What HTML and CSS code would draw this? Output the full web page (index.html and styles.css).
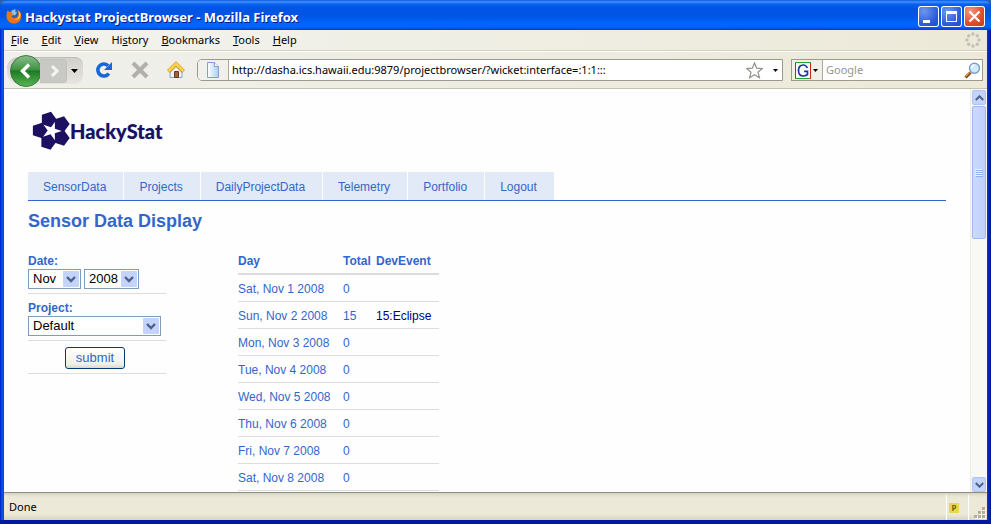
FILE: index.html
```html
<!DOCTYPE html>
<html lang="en">
<head>
<meta charset="utf-8">
<title>Hackystat ProjectBrowser - Mozilla Firefox</title>
<link rel="stylesheet" href="styles.css">
</head>
<body>
<div class="window">
  <header class="titlebar">
    <svg class="fox" viewBox="0 0 16 16" width="16" height="16" aria-hidden="true">
      <circle cx="8" cy="8" r="7" fill="#2a5fb4"/>
      <path d="M5 3.500q2-2.500 5-2l-1 2 2 1-2 3-3-1z" fill="#8cc4ee"/>
      <path d="M1.500 2.500L3.500 4l3-.5-1 2 2 1.500-2 1.500c1 2 4.500 2 6.500-.5.800-2 .5-4-1-6.500 3 1.500 4.500 4 4.300 7C15 13 12 15.600 8 15.600S.6 12.500.5 8.500c0-2.500.3-4.500 1-6z" fill="#e8761c"/>
      <path d="M12.500 2.500c2.500 2.500 2.500 6 .5 8-1.500 1.500-4 1.500-5 1 4 .2 6-3 4.500-9z" fill="#ffd24a"/>
    </svg>
    <h1 class="title">Hackystat ProjectBrowser - Mozilla Firefox</h1>
    <div class="controls">
      <button class="ctl" aria-label="Minimize"><svg viewBox="0 0 21 21" width="21" height="21"><path d="M5 14h7v3H5z" fill="#fff"/></svg></button>
      <button class="ctl" aria-label="Maximize"><svg viewBox="0 0 21 21" width="21" height="21"><path d="M5 5h11v11H5zM6 8v7h9V8z" fill="#fff" fill-rule="evenodd"/></svg></button>
      <button class="ctl ctl-close" aria-label="Close"><svg viewBox="0 0 21 21" width="21" height="21"><path d="M5.500 5.500l10 10M15.500 5.500l-10 10" stroke="#fff" stroke-width="2.200"/></svg></button>
    </div>
  </header>

  <nav class="menubar">
    <button><u>F</u>ile</button>
    <button><u>E</u>dit</button>
    <button><u>V</u>iew</button>
    <button>Hi<u>s</u>tory</button>
    <button><u>B</u>ookmarks</button>
    <button><u>T</u>ools</button>
    <button><u>H</u>elp</button>
    <svg class="throbber" viewBox="0 0 16 16" width="16" height="16" aria-hidden="true">
      <g fill="#c3c1b6"><circle cx="8" cy="2" r="1.700"/><circle cx="12.300" cy="3.700" r="1.700"/><circle cx="14" cy="8" r="1.700"/><circle cx="12.300" cy="12.300" r="1.700"/><circle cx="8" cy="14" r="1.700"/><circle cx="3.700" cy="12.300" r="1.700"/><circle cx="2" cy="8" r="1.700"/><circle cx="3.700" cy="3.700" r="1.700"/></g>
    </svg>
  </nav>

  <div class="toolbar">
    <div class="history">
      <button class="back" aria-label="Back"><svg viewBox="0 0 32 32" width="32" height="32">
        <defs><linearGradient id="green" x1="0" y1="0" x2="0" y2="1"><stop offset="0" stop-color="#8abf8a"/><stop offset=".45" stop-color="#3f9443"/><stop offset=".5" stop-color="#1d7a24"/><stop offset="1" stop-color="#58b652"/></linearGradient></defs>
        <circle cx="16" cy="16" r="15.500" fill="url(#green)" stroke="#3f7842"/>
        <path d="M19 9.500L12.500 16l6.500 6.500" fill="none" stroke="#fff" stroke-width="3.400"/>
      </svg></button>
      <button class="forward" aria-label="Forward"><svg viewBox="0 0 26 22" width="26" height="22"><path d="M12 6l5 5-5 5" fill="none" stroke="#f4f4f2" stroke-width="3"/></svg></button>
      <button class="drop" aria-label="Recent pages"><svg viewBox="0 0 7 4" width="7" height="4"><path d="M0 0h7L3.500 4z"/></svg></button>
    </div>
    <button class="tool" aria-label="Reload"><svg viewBox="0 0 18 18" width="18" height="18"><path d="M13.800 12.400A6 6 0 1 1 13 4.700" fill="none" stroke="#1767d8" stroke-width="3.600"/><path d="M17 1v8H9z" fill="#1767d8"/></svg></button>
    <button class="tool" aria-label="Stop"><svg viewBox="0 0 18 18" width="18" height="18"><path d="M2 2l14 14M16 2L2 16" stroke="#b1b0aa" stroke-width="4"/></svg></button>
    <button class="tool" aria-label="Home"><svg viewBox="0 0 18 18" width="18" height="18"><path d="M3 9l6-6 6 6v7.500H3z" fill="#eef4fd" stroke="#8aa4d0"/><path d="M7.500 10.500h4v6h-4z" fill="#a5623a" stroke="#6b3819"/><path d="M1.500 10.500L9 3l7.500 7.500" fill="none" stroke="#cf8a10" stroke-width="4"/><path d="M1.700 10L9 2.800l7.300 7.200" fill="none" stroke="#ffd550" stroke-width="2.600"/></svg></button>
    <div class="address">
      <label class="site" for="url" aria-label="Address"><svg viewBox="0 0 14 16" width="14" height="16"><defs><linearGradient id="sheet"><stop stop-color="#fff"/><stop offset="1" stop-color="#abcdf5"/></linearGradient></defs><path d="M1.500.5h7l4 4v11h-11z" fill="url(#sheet)" stroke="#7f9fd6"/><path d="M8.500.5v4h4" fill="#fff" stroke="#7f9fd6"/></svg></label>
      <input id="url" type="text" value="http://dasha.ics.hawaii.edu:9879/projectbrowser/?wicket:interface=:1:1:::">
      <button class="star" aria-label="Bookmark"><svg viewBox="0 0 17 17" width="17" height="17"><path d="M8.500 1l2.200 5.200 5.500.4-4.200 3.600 1.400 5.500-4.900-3-4.900 3L5 10.200.8 6.600l5.500-.4z" fill="#fff" stroke="#92928c" stroke-width="1.200"/></svg></button>
      <button class="drop" aria-label="Show history"><svg viewBox="0 0 5 3" width="5" height="3"><path d="M0 0h5L2.500 3z"/></svg></button>
    </div>
    <div class="search">
      <button class="engine" aria-label="Search engine"><svg viewBox="0 0 23 17" width="23" height="17"><path d="M0 0h16v17H0z" fill="#fff"/><path d="M.5 17V.5H15" fill="none" stroke="#2750c0"/><path d="M1 .5h15M0 16.500h15" stroke="#29a329"/><path d="M15.500 1v16" stroke="#d32020"/><path d="M12.300 6C11.500 3.800 10 3 8.200 3 5.300 3 3.500 5.300 3.500 8.500S5.300 14 8.200 14c1.700 0 3.100-.6 4.300-1.500V9.300H9" fill="none" stroke="#183a9c" stroke-width="1.700"/><path d="M18 7h5l-2.500 3z"/></svg></button>
      <input type="text" placeholder="Google" aria-label="Search">
      <button class="glass" aria-label="Search"><svg viewBox="0 0 17 17" width="17" height="17"><path d="M1.500 15.500l5-5" stroke="#754018" stroke-width="3"/><path d="M1.500 14.500l4-4" stroke="#e79b35" stroke-width="1.500"/><circle cx="10.500" cy="6.200" r="5" fill="#cdebfb" stroke="#7d9cc4" stroke-width="1.400"/><path d="M7.500 6a3.200 3.200 0 0 1 3-3" fill="none" stroke="#fff" stroke-width="1.500"/></svg></button>
    </div>
  </div>

  <div class="viewport">
    <main class="page">
      <div class="logo">
        <svg viewBox="0 0 38 40" width="38" height="40" aria-hidden="true">
          <defs><path id="patch" d="M7.300 0L2.260 6.940-5.900 4.290v-8.580l8.160-2.650z"/></defs>
          <g fill="#1e1060">
            <use href="#patch" transform="translate(7.500 19.500) scale(1.120)"/>
            <use href="#patch" transform="translate(16.500 8.500) rotate(72) scale(1.120)"/>
            <use href="#patch" transform="translate(29.500 13) rotate(144) scale(1.120)"/>
            <use href="#patch" transform="translate(29.500 27) rotate(216) scale(1.120)"/>
            <use href="#patch" transform="translate(16 31) rotate(288) scale(1.120)"/>
          </g>
        </svg>
        <span>HackyStat</span>
      </div>
      <nav class="tabs">
        <a href="#">SensorData</a>
        <a href="#">Projects</a>
        <a href="#">DailyProjectData</a>
        <a href="#">Telemetry</a>
        <a href="#">Portfolio</a>
        <a href="#">Logout</a>
      </nav>
      <h2>Sensor Data Display</h2>
      <div class="columns">
        <form class="filters">
          <div class="field">
            <label for="month">Date:</label>
            <div class="selects">
              <span class="select month"><select id="month"><option>Nov</option></select><svg viewBox="0 0 16 16" width="16" height="16"><rect width="16" height="16" rx="1" fill="#c3d3fb"/><path d="M4 6l4 4 4-4" fill="none" stroke="#4d6185" stroke-width="2.400"/></svg></span>
              <span class="select year"><select aria-label="Year"><option>2008</option></select><svg viewBox="0 0 16 16" width="16" height="16"><rect width="16" height="16" rx="1" fill="#c3d3fb"/><path d="M4 6l4 4 4-4" fill="none" stroke="#4d6185" stroke-width="2.400"/></svg></span>
            </div>
          </div>
          <div class="field">
            <label for="project">Project:</label>
            <div class="selects">
              <span class="select project"><select id="project"><option>Default</option></select><svg viewBox="0 0 16 16" width="16" height="16"><rect width="16" height="16" rx="1" fill="#c3d3fb"/><path d="M4 6l4 4 4-4" fill="none" stroke="#4d6185" stroke-width="2.400"/></svg></span>
            </div>
          </div>
          <div class="field actions"><button type="button" class="submit">submit</button></div>
        </form>
        <table class="data">
          <thead><tr><th class="day">Day</th><th class="total">Total</th><th>DevEvent</th></tr></thead>
          <tbody>
            <tr><td>Sat, Nov 1 2008</td><td>0</td><td></td></tr>
            <tr><td>Sun, Nov 2 2008</td><td>15</td><td><a href="#">15:Eclipse</a></td></tr>
            <tr><td>Mon, Nov 3 2008</td><td>0</td><td></td></tr>
            <tr><td>Tue, Nov 4 2008</td><td>0</td><td></td></tr>
            <tr><td>Wed, Nov 5 2008</td><td>0</td><td></td></tr>
            <tr><td>Thu, Nov 6 2008</td><td>0</td><td></td></tr>
            <tr><td>Fri, Nov 7 2008</td><td>0</td><td></td></tr>
            <tr><td>Sat, Nov 8 2008</td><td>0</td><td></td></tr>
          </tbody>
        </table>
      </div>
    </main>
    <div class="scrollbar">
      <button class="arrow" aria-label="Scroll up"><svg viewBox="0 0 9 6" width="9" height="6"><path d="M.8 5l3.700-3.700L8.200 5" fill="none" stroke="#4d6185" stroke-width="2"/></svg></button>
      <div class="track"><div class="thumb"><svg viewBox="0 0 8 8" width="8" height="8"><path d="M0 .5h7M0 2.500h7M0 4.500h7M0 6.500h7" stroke="#eef4fe"/><path d="M1 1.500h7M1 3.500h7M1 5.500h7M1 7.500h7" stroke="#8cb0f8"/></svg></div></div>
      <button class="arrow" aria-label="Scroll down"><svg viewBox="0 0 9 6" width="9" height="6"><path d="M.8 1l3.700 3.700L8.200 1" fill="none" stroke="#4d6185" stroke-width="2"/></svg></button>
    </div>
  </div>

  <footer class="status">
    <span class="message">Done</span>
    <span class="addon"><b>P</b></span>
    <svg class="grip" viewBox="0 0 12 12" width="12" height="12" aria-hidden="true"><g fill="#fff"><path d="M9 1h3v3H9zM5 5h3v3H5zM9 5h3v3H9zM1 9h3v3H1zM5 9h3v3H5zM9 9h3v3H9z"/></g><g fill="#b2ad98"><path d="M8 0h3v3H8zM4 4h3v3H4zM8 4h3v3H8zM0 8h3v3H0zM4 8h3v3H4zM8 8h3v3H8z"/></g></svg>
  </footer>
</div>
</body>
</html>
```
FILE: styles.css
```css
* { box-sizing: border-box; }

body {
  margin: 0;
  background: #2a62ae;
  font: 11px/14px "Noto Sans", sans-serif;
  color: #000;
}

button {
  margin: 0;
  padding: 0;
  border: 0;
  background: none;
  font: inherit;
  color: inherit;
}

svg { display: block; flex: none; }

.window {
  display: flex;
  flex-direction: column;
  height: 100vh;
  padding: 0 4px 4px;
  overflow: hidden;
  border-radius: 8px 8px 0 0;
  background: linear-gradient(90deg, #0019cf, #0855dd 2px, #0855dd 3px, #003ddc 4px, #003ddc calc(100% - 4px), #0030c8 calc(100% - 3px), #00138c);
  box-shadow: inset 0 -4px #0019a0;
}

/* Title bar */
.titlebar {
  display: flex;
  align-items: center;
  gap: 3px;
  flex: none;
  height: 30px;
  margin: 0 -4px;
  padding: 2px 6px 0;
  background: linear-gradient(#0a5ae0, #3f92ff 2px, #0a62ee 4px, #0054e3 8px, #0055e5 16px, #0066ff 24px, #0062f8 27px, #003dd7 30px);
}

.title {
  flex: 1;
  margin: 0;
  padding-top: 1px;
  font: bold 13px/18px "Noto Sans", sans-serif;
  color: #fff;
  text-shadow: 1px 1px #0a1883;
  white-space: nowrap;
}

.controls { display: flex; gap: 2px; }

.ctl {
  display: grid;
  place-items: center;
  width: 21px;
  height: 21px;
  border-radius: 3px;
  background: radial-gradient(circle at 30% 25%, #6e97f0, #2b5cdb 60%, #1b47c4);
  box-shadow: inset 0 0 0 1px #fff;
}

.ctl-close { background: radial-gradient(circle at 30% 25%, #f09a82, #dd4f2b 55%, #c0371a); }

/* Menu */
.menubar {
  display: flex;
  align-items: center;
  gap: 13px;
  flex: none;
  height: 21px;
  padding: 0 6px 0 7px;
  border-bottom: 1px solid #d3cfbc;
  background: linear-gradient(90deg, #f3f3ef, #ece9d8);
}

.throbber { margin-left: auto; }

/* Navigation toolbar */
.toolbar {
  display: flex;
  align-items: center;
  flex: none;
  height: 38px;
  padding: 0 4px 0 3px;
  border-top: 1px solid #fff;
  border-bottom: 1px solid #c5c2b2;
  background: linear-gradient(90deg, #f0f0ec, #ece9d8);
}

.history {
  display: flex;
  align-items: center;
  width: 76px;
  height: 27px;
  margin-right: 12px;
  padding-left: 3px;
  border-top: 1px solid #bdbcb5;
  border-radius: 12px 8px 8px 12px;
  background: linear-gradient(#d1d0ca, #e6e5df);
}

.forward {
  margin-left: -2px;
  border: 1px solid #c2c2bd;
  border-left: 0;
  border-radius: 0 4px 4px 0;
  background: #c8c8c4;
}

.drop { padding: 4px; }

.tool { margin-right: 18px; }

.address,
.search {
  display: flex;
  align-items: center;
  height: 22px;
  border: 1px solid #9c9a8c;
  background: #fff;
}

.address {
  flex: 1;
  min-width: 0;
  margin-right: 8px;
  margin-left: -6px;
  border-radius: 5px 0 0 5px;
}

.site {
  display: grid;
  place-items: center;
  align-self: stretch;
  width: 31px;
  border-right: 1px solid #aaa899;
  border-radius: 4px 0 0 4px;
  background: #f1f0ea;
}

input {
  flex: 1;
  min-width: 0;
  padding: 0 3px;
  border: 0;
  background: none;
  font: inherit;
  color: inherit;
}

.star { margin-right: 6px; }

.search { width: 192px; padding-right: 1px; }

.engine {
  align-self: stretch;
  padding: 0 4px 0 3px;
  border-right: 1px solid #aaa899;
  background: #f1f0e8;
}

.search input::placeholder { color: #98968a; opacity: 1; }

/* Page area */
.viewport {
  display: flex;
  flex: 1;
  min-height: 0;
  background: #fff;
}

.page {
  flex: 1;
  min-width: 0;
  padding: 22px 24px 0;
  overflow: hidden;
  background: #fefefe;
  font: 12px/16px "Liberation Sans", Arial, sans-serif;
  color: #3366cc;
}

.logo {
  display: flex;
  align-items: center;
  height: 40px;
  margin: 0 0 21px 4px;
  font: 900 20px/24px Lato, sans-serif;
  color: #1e1060;
}

.logo span { text-shadow: 0 0 1px #8ecbe0; }

.tabs {
  display: flex;
  gap: 1px;
  border-bottom: 1px solid #3366cc;
}

.tabs a {
  padding: 7px 17px 5px 15px;
  background: #e3eaf7;
  color: #3366cc;
  text-decoration: none;
}

h2 {
  margin: 9px 0 21px;
  font: bold 18px/22px "Liberation Sans", Arial, sans-serif;
}

.columns {
  display: grid;
  grid-template-columns: 138px 201px;
  align-items: start;
  gap: 72px;
}

.field {
  margin-bottom: 6px;
  padding-bottom: 4px;
  border-bottom: 1px solid #dcdcdc;
}

.field label {
  display: block;
  font-weight: bold;
}

.selects { display: flex; gap: 3px; }

.select {
  display: grid;
  align-items: center;
  height: 20px;
}

.select > * { grid-area: 1 / 1; }

.select svg {
  justify-self: end;
  margin-right: 2px;
  pointer-events: none;
}

.select select {
  appearance: none;
  width: 100%;
  height: 20px;
  padding: 0 4px;
  border: 1px solid #7f9db9;
  border-radius: 0;
  background: #fff;
  font: 13px/16px "Liberation Sans", Arial, sans-serif;
  color: #000;
}

.month { width: 53px; }
.year { width: 55px; }
.project { width: 133px; }

.actions {
  display: grid;
  justify-items: center;
  padding-right: 4px;
}

.submit {
  height: 22px;
  padding: 0 10px;
  border: 1px solid #003c74;
  border-radius: 3px;
  background: linear-gradient(#fff, #f0f0ea 80%, #dcd8cc);
  font: 13px/16px "Liberation Sans", Arial, sans-serif;
  color: #3366cc;
}

.data {
  width: 100%;
  border-collapse: collapse;
  table-layout: fixed;
  text-align: left;
  white-space: nowrap;
}

.data th {
  height: 21px;
  padding: 0 0 4px;
  border-bottom: 2px solid #dcdcdc;
}

.data td {
  height: 27px;
  padding: 3px 0 0;
  border-bottom: 1px solid #dcdcdc;
}

.data a { color: #000080; text-decoration: none; }

.day { width: 105px; }
.total { width: 33px; }

/* Scroll bar */
.scrollbar {
  display: flex;
  flex-direction: column;
  width: 17px;
  padding: 1px 1px 0;
  border-left: 1px solid #eeede5;
  background: #f8f8f5;
}

.arrow {
  display: grid;
  place-items: center;
  flex: none;
  height: 15px;
  border: 1px solid #b0c4f4;
  border-radius: 2px;
  background: #c3d3fd;
}

.track { flex: 1; padding: 1px 0; }

.thumb {
  display: grid;
  place-items: center;
  height: 36%;
  border: 1px solid #9fb8ee;
  border-radius: 2px;
  background: linear-gradient(90deg, #cbdafe, #bfd0fc);
}

/* Status bar */
.status {
  display: flex;
  align-items: center;
  flex: none;
  height: 28px;
  padding-left: 5px;
  border-top: 1px solid #8f8d80;
  background: linear-gradient(#d6d3c3, #ece9d8 4px, #ece9d8 21px, #d8d4c2);
}

.message { flex: 1; }

.addon {
  display: flex;
  align-items: center;
  align-self: stretch;
  width: 23px;
  margin-top: 2px;
  padding-left: 2px;
  border: solid #fff;
  border-width: 0 1px;
}

.addon b {
  width: 10px;
  background: #ead84a;
  color: #6c641c;
  font-size: 8px;
  line-height: 10px;
  text-align: center;
}

.grip { align-self: end; margin: 0 1px 1px 5px; }
```
